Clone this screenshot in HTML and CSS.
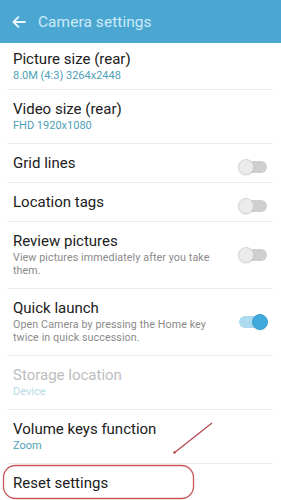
FILE: index.html
```html
<!DOCTYPE html>
<html>
<head>
<meta charset="utf-8">
<link rel="stylesheet" href="styles.css">
</head>
<body>
<div class="screen">
  <header class="appbar">
    <svg class="back" width="14" height="12" viewBox="0 0 14 12"><path d="M13 6H1.6M6.4 1.2L1.4 6l5 4.8" fill="none" stroke="#eef8fc" stroke-width="1.8" stroke-linecap="round" stroke-linejoin="round"/></svg>
    <h1 class="title">Camera settings</h1>
  </header>
  <ul class="list">
    <li class="item first">
      <div class="text"><div class="label">Picture size (rear)</div><div class="value">8.0M (4:3) 3264x2448</div></div>
    </li>
    <li class="item">
      <div class="text"><div class="label">Video size (rear)</div><div class="value">FHD 1920x1080</div></div>
    </li>
    <li class="item single">
      <div class="text"><div class="label">Grid lines</div></div>
      <span class="toggle"><span class="track"></span><span class="knob"></span></span>
    </li>
    <li class="item single">
      <div class="text"><div class="label">Location tags</div></div>
      <span class="toggle"><span class="track"></span><span class="knob"></span></span>
    </li>
    <li class="item">
      <div class="text"><div class="label">Review pictures</div><div class="desc">View pictures immediately after you take them.</div></div>
      <span class="toggle"><span class="track"></span><span class="knob"></span></span>
    </li>
    <li class="item">
      <div class="text"><div class="label">Quick launch</div><div class="desc">Open Camera by pressing the Home key twice in quick succession.</div></div>
      <span class="toggle on"><span class="track"></span><span class="knob"></span></span>
    </li>
    <li class="item disabled">
      <div class="text"><div class="label">Storage location</div><div class="value">Device</div></div>
    </li>
    <li class="item">
      <div class="text"><div class="label">Volume keys function</div><div class="value">Zoom</div></div>
    </li>
    <li class="item single">
      <div class="text"><div class="label">Reset settings</div></div>
    </li>
  </ul>
  <svg class="annotation" width="281" height="500" viewBox="0 0 281 500">
    <rect x="3.5" y="465.5" width="190" height="33" rx="12" fill="none" stroke="#c9575b" stroke-width="1.3"/>
    <path d="M212 423L174 453" stroke="#b5454f" stroke-width="1.2" fill="none"/>
    <circle cx="174.5" cy="452.5" r="1.2" fill="#b5454f"/>
  </svg>
</div>
</body>
</html>
```
FILE: styles.css
```css
* { box-sizing: border-box; }
html, body { margin: 0; padding: 0; background: #fff; }
body { font-family: Roboto, "Noto Sans", sans-serif; }
.screen { position: relative; width: 281px; height: 500px; overflow: hidden; background: #fff; }
.appbar {
  height: 43px;
  background: #4ba7d2;
  display: flex;
  align-items: center;
  padding-left: 12px;
  gap: 12px;
}
.back { display: block; flex: none; margin-top: 1px; }
.title {
  margin: 0;
  font-size: 15.4px;
  font-weight: 400;
  color: #cdebf7;
  letter-spacing: 0.1px;
}
.list { list-style: none; margin: 0 8px 0 7px; padding: 0; }
.item {
  display: flex;
  align-items: center;
  justify-content: space-between;
  padding: 10px 6px 11px 6px;
  border-bottom: 1px solid #ebebeb;
}
.item.first { padding-top: 7px; padding-bottom: 7px; }
.item.single { padding-bottom: 9px; }
.item.single .toggle { margin-top: 3px; margin-bottom: -3px; }
.text { flex: 1; min-width: 0; }
.label { font-size: 15px; line-height: 19px; color: #202020; }
.value { font-size: 11px; line-height: 13px; color: #4e9fb8; }
.desc { font-size: 10.7px; line-height: 13px; color: #8a8a8a; padding-right: 10px; letter-spacing: 0.1px; }
.disabled .label { color: #bdbdbd; }
.disabled .value { color: #b9dbe6; }
.toggle { position: relative; flex: none; width: 30px; height: 16px; margin-left: 0; margin-right: -1px; }
.track { position: absolute; left: 5px; right: 1px; top: 2px; height: 12px; border-radius: 6px; background: #cfcfcf; }
.knob {
  position: absolute; left: 0; top: 0; width: 16px; height: 16px; border-radius: 50%;
  background: #ececec; border: 1px solid #d4d4d4; box-shadow: 0 1px 1px rgba(0,0,0,0.08);
}
.toggle.on .track { left: 1px; right: 5px; background: #acdaf0; }
.toggle.on .knob { left: auto; right: 0; background: #41a9dc; border-color: #3aa0d4; }
.annotation { position: absolute; left: 0; top: 0; pointer-events: none; }
```
